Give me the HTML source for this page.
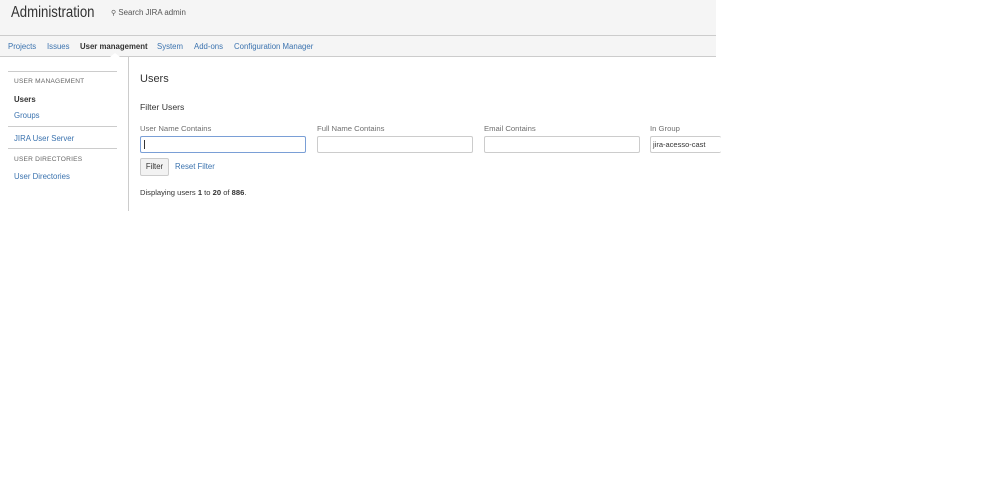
<!DOCTYPE html>
<html><head><meta charset="utf-8"><style>
body{margin:0;width:999px;height:484px;background:#fff;font-family:"Liberation Sans",Arial,sans-serif;position:relative;overflow:hidden;color:#333}
.a{position:absolute;white-space:nowrap}
.lnk{color:#3b73af}
.inp{position:absolute;height:15px;border:1px solid #ccc;border-radius:2px;background:#fff;top:136px}
.lbl{position:absolute;top:124px;font-size:7.7px;color:#707070}
.nav{top:42px;font-size:7.8px}
</style></head><body>
<div class="a" style="left:0;top:0;width:716px;height:35px;background:#f5f5f5;border-bottom:1px solid #ccc"></div>
<div class="a" style="left:0;top:36px;width:716px;height:20px;background:#f5f5f5;border-bottom:1px solid #ccc"></div>
<div class="a" style="left:11px;top:4px;font-size:15.5px;color:#333;transform:scaleX(0.85);transform-origin:0 0">Administration</div>
<div class="a" style="left:111px;top:8px;font-size:7.9px;color:#555"><span style="font-size:7px">&#9906;</span> Search JIRA admin</div>
<div class="a nav lnk" style="left:8px">Projects</div>
<div class="a nav lnk" style="left:47px">Issues</div>
<div class="a nav" style="left:80px;font-weight:bold;color:#333">User management</div>
<div class="a nav lnk" style="left:157px">System</div>
<div class="a nav lnk" style="left:194px">Add-ons</div>
<div class="a nav lnk" style="left:234px">Configuration Manager</div>
<div class="a" style="left:110px;top:53px;width:0;height:0;border-left:5px solid transparent;border-right:5px solid transparent;border-bottom:4px solid #fff"></div>
<div class="a" style="left:128px;top:57px;width:1px;height:154px;background:#ccc"></div>
<div class="a" style="left:8px;top:71px;width:109px;height:1px;background:#ccc"></div>
<div class="a" style="left:14px;top:78px;font-size:6.6px;color:#666;letter-spacing:.2px">USER MANAGEMENT</div>
<div class="a" style="left:14px;top:95px;font-size:7.8px;font-weight:bold">Users</div>
<div class="a lnk" style="left:14px;top:111px;font-size:7.8px">Groups</div>
<div class="a" style="left:8px;top:126px;width:109px;height:1px;background:#ccc"></div>
<div class="a lnk" style="left:14px;top:134px;font-size:7.8px">JIRA User Server</div>
<div class="a" style="left:8px;top:148px;width:109px;height:1px;background:#ccc"></div>
<div class="a" style="left:14px;top:156px;font-size:6.6px;color:#666;letter-spacing:.2px">USER DIRECTORIES</div>
<div class="a lnk" style="left:14px;top:172px;font-size:7.8px">User Directories</div>
<div class="a" style="left:140px;top:73px;font-size:11px;color:#333">Users</div>
<div class="a" style="left:140px;top:102px;font-size:8.7px;color:#333">Filter Users</div>
<div class="lbl" style="left:140px">User Name Contains</div>
<div class="lbl" style="left:317px">Full Name Contains</div>
<div class="lbl" style="left:484px">Email Contains</div>
<div class="lbl" style="left:650px">In Group</div>
<div class="inp" style="left:140px;width:164px;border-color:#7a9fd6"><div class="a" style="left:3px;top:3px;width:1px;height:9px;background:#333"></div></div>
<div class="inp" style="left:317px;width:154px"></div>
<div class="inp" style="left:484px;width:154px"></div>
<div class="inp" style="left:650px;width:70px;border-right:none"><div class="a" style="left:2px;top:3px;font-size:7.5px;color:#333">jira-acesso-cast</div></div>
<div class="a" style="left:140px;top:158px;width:27px;height:16px;background:#f2f2f2;border:1px solid #ccc;border-radius:2px;font-size:7.8px;text-align:center;line-height:16px">Filter</div>
<div class="a lnk" style="left:175px;top:162px;font-size:7.8px">Reset Filter</div>
<div class="a" style="left:140px;top:188px;font-size:7.6px">Displaying users <b>1</b> to <b>20</b> of <b>886</b>.</div>
</body></html>
